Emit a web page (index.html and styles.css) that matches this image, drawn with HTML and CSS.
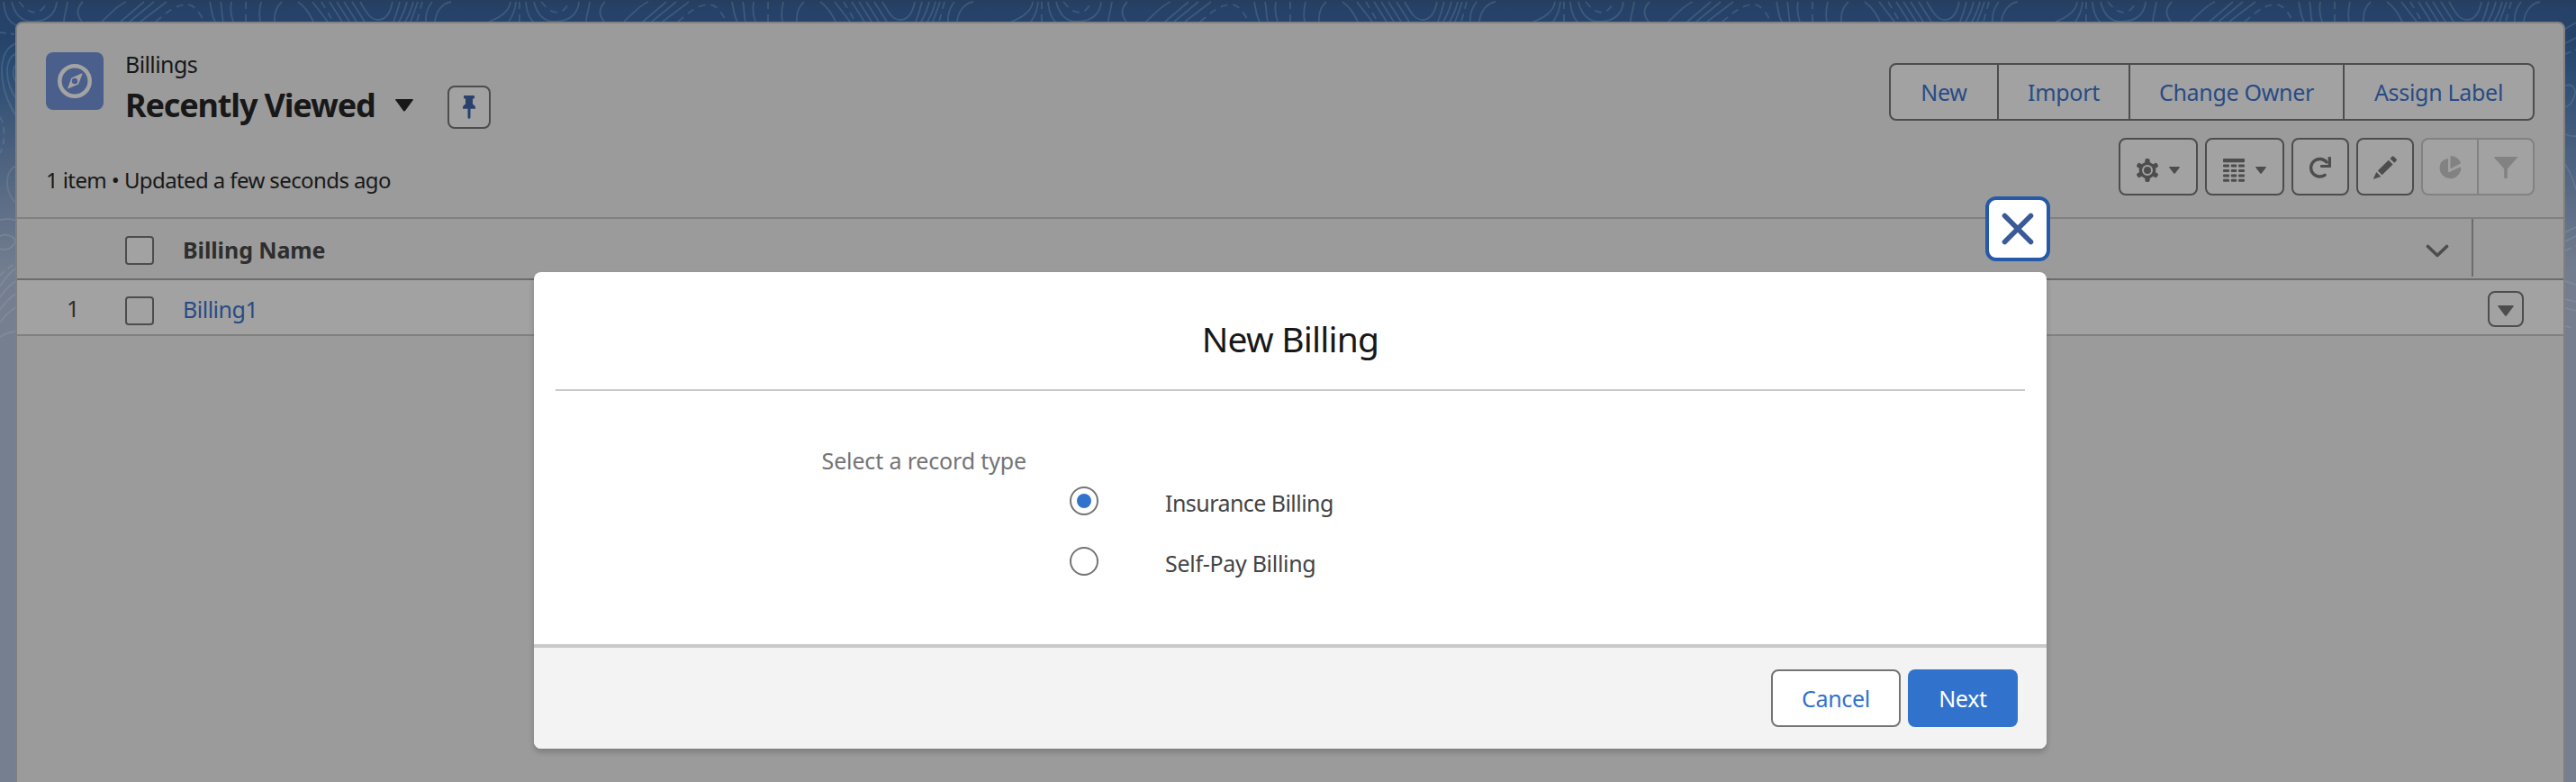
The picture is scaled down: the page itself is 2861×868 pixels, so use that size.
FILE: index.html
```html
<!DOCTYPE html>
<html lang="en">
<head>
<meta charset="utf-8">
<title>Recently Viewed | Billings</title>
<link rel="stylesheet" href="styles.css">
</head>
<body>
<svg class="backdrop" width="2861" height="400" viewBox="0 0 2861 400" aria-hidden="true">
  <defs>
    <g id="contours">
      <path d="M4 2C5 14 8 24 18 28M13 2C16 14 22 24 36 24C54 24 62 14 63 2M75 2C74 10 71 18 71 24M92 2C84 10 86 18 91 24M140 2C130 6 122 16 113 24M160 2L134 24M171 2L144 24M185 2L156 24M233 2C235 10 235 18 239 24M245 2C247 10 246 18 248 24M257 2Q255 14 259 24M290 2Q287 14 289 24M313 2Q304 10 305 24M331 2C342 10 345 18 348 24M347 2L364 24M366 2L380 24M374 2L388 24M382 2L396 24M391 2L405 24M400 2C408 16 412 22 420 22C430 22 434 12 436 2M444 2Q441 14 437 24M452 2Q449 14 443 24M459 2Q456 14 450 24M464 2Q460 14 456 24M480 2Q472 12 473 24M501 2C490 4 484 14 483 24M567 2C566 12 555 20 543 24M573 2Q572 14 565 24"/>
      <path stroke-dasharray="8 6" d="M21 2C28 10 33 14 40 14C46 13 50 7 52 2M173 24C185 14 195 5 207 5C217 5 222 16 227 24M273 2V24M357 2L370 24M469 2L463 24M577 2V24"/>
    </g>
  </defs>
  <g class="contour-lines">
    <use href="#contours"/><use href="#contours" x="580"/><use href="#contours" x="1160"/><use href="#contours" x="1740"/><use href="#contours" x="2320"/>
    <path d="M20 48C-4 52-4 96 20 132M20 59C4 62 4 92 20 112M20 70C14 74 12 84 20 94M20 184C4 186 4 218 20 226"/>
    <path stroke-dasharray="7 5" d="M0 36L16 38M0 130C6 138 6 160 0 170"/>
    <path d="M2849 32L2861 25M2849 48L2861 42M2849 95C2858 92 2863 100 2858 110C2854 119 2850 119 2847 118M2847 148Q2854 152 2861 151M2847 180Q2855 190 2861 210"/>
    <path stroke-dasharray="7 5" d="M2849 60L2861 55"/>
    <g class="faint">
      <path d="M0 244Q10 242 20 245M0 262C8 258 20 264 16 270C12 278 4 278 0 276M0 318Q8 304 20 296M0 330Q8 318 20 310M0 344Q8 332 20 324M0 358Q8 346 20 340M0 374Q8 368 20 368M2849 258L2861 252M2849 268L2861 262M2849 312L2861 316M2849 332L2861 335M2849 342L2861 345"/>
      <path stroke-dasharray="7 5" d="M0 306Q8 296 20 292M2849 278L2861 273M2849 362L2861 365"/>
    </g>
  </g>
</svg>

<main class="panel">
  <header class="list-header">
    <div class="heading-side">
      <div class="heading">
        <div class="object-icon">
          <svg width="64" height="64" viewBox="0 0 64 64"><circle cx="32" cy="32" r="16.7" fill="none" stroke="#a3a3a3" stroke-width="4.6"/><path fill="#a3a3a3" fill-rule="evenodd" d="M39.600 23.600q1.400-.6.800.8l-4.300 11-11 4.800q-1.300.5-.8-.8l4-10.800zM32 28.800a3.200 3.200 0 1 0 0 6.400a3.200 3.200 0 0 0 0-6.400z"/></svg>
        </div>
        <div class="titles">
          <div class="object-name">Billings</div>
          <div class="view-line">
            <h1 class="view-name">Recently Viewed</h1>
            <svg class="view-caret" width="20" height="14" viewBox="0 0 20 14"><path fill="#181818" d="M1 0h18q1.500 0 .6 1.300L11 13q-1 1.200-2 0L.4 1.300Q-.5 0 1 0z"/></svg>
            <button class="pin"><svg width="16" height="26" viewBox="0 0 16 26"><path fill="#29416c" d="M3 0h10q1 0 1 1v1.400q0 1-1 1H12v6q2.800 1.300 3.200 4 .1 1.400-1 1.400H9.500V24q0 1.500-1.500 2-1.500-.5-1.500-2v-9.200H1.800q-1.100 0-1-1.400.4-2.700 3.200-4v-6H3q-1 0-1-1V1q0-1 1-1z"/></svg></button>
          </div>
        </div>
      </div>
      <div class="status">1 item • Updated a few seconds ago</div>
    </div>
    <div class="actions">
      <div class="button-group">
        <button class="b-new">New</button><button class="b-import">Import</button><button class="b-owner">Change Owner</button><button class="b-label">Assign Label</button>
      </div>
      <div class="tools">
        <button class="tool wide">
          <svg class="low" width="24" height="26" viewBox="0 0 24 26"><g fill="#4d4d4d"><circle cx="12" cy="13" r="9.300"/><rect x="9.300" y="0" width="5.400" height="26" rx="2"/><rect x="9.300" y="0" width="5.400" height="26" rx="2" transform="rotate(60 12 13)"/><rect x="9.300" y="0" width="5.400" height="26" rx="2" transform="rotate(120 12 13)"/></g><circle cx="12" cy="13" r="5" fill="#4d4d4d" stroke="#a2a2a2" stroke-width="2"/></svg>
          <svg class="low" width="12" height="8" viewBox="0 0 12 8"><path fill="#4d4d4d" d="M.5 0h11q.8 0 .2.9L6.700 7.500q-.7.800-1.400 0L.3.900Q-.3 0 .5 0z"/></svg>
        </button>
        <button class="tool wide">
          <svg class="low" width="24" height="26" viewBox="0 0 24 26" fill="#4d4d4d"><rect width="24" height="4.300" rx="1"/><g id="cells"><rect y="6.600" width="7" height="3" rx="1"/><rect x="8.800" y="6.600" width="6.400" height="3" rx="1"/><rect x="17" y="6.600" width="7" height="3" rx="1"/></g><use href="#cells" y="5.400"/><use href="#cells" y="10.800"/><use href="#cells" y="16.200"/></svg>
          <svg class="low" width="12" height="8" viewBox="0 0 12 8"><path fill="#4d4d4d" d="M.5 0h11q.8 0 .2.900L6.700 7.500q-.7.800-1.400 0L.3.900Q-.3 0 .5 0z"/></svg>
        </button>
        <button class="tool"><svg class="high" width="24" height="24" viewBox="0 0 24 24"><path fill="none" stroke="#4d4d4d" stroke-width="3.400" stroke-linecap="round" d="M17 20.300A9.800 9.800 0 1 1 19 6"/><path fill="#4d4d4d" d="M20.600 1q0-1 1-1H23q1 0 1 1v10q0 1-1 1H13.300q-1.300 0-1.300-1V10q0-1 1.300-1h7.300z"/></svg></button>
        <button class="tool"><svg class="high" width="26" height="26" viewBox="0 0 26 26" fill="#4d4d4d"><path d="M18.500 3l2.200-2.200q1-1 2 0l2.800 2.800q1 1 0 2L23.200 7.800zM16.800 4.700l4.800 4.700L9.600 21.200l-4.800-4.700zM3.300 18l5 4.900-7.200 2.700q-1.300.4-.9-.9z"/></svg></button>
        <div class="tool-pair">
          <button><svg class="high" width="25" height="26" viewBox="0 0 25 26" fill="#828282"><path d="M10 3Q.5 4.500.5 14A12 12 0 0 0 24 16.500q.3-2.800-.2-4.200L11.300 18q-1.300.6-1.300-1z"/><path d="M12.500 1q0-1 1-1Q21 .8 23.800 7.500q.4.900-.5 1.300l-9.500 5q-1.300.7-1.300-.8z"/></svg></button>
          <button><svg class="high" width="26" height="24" viewBox="0 0 26 24"><path fill="#828282" d="M1 0h24q1.500 0 .6 1.300L15.600 12.500q-.8 1-.8 2V23q0 1-1 1h-1.600q-1 0-1-1v-8.500q0-1-.8-2L.4 1.300Q-.5 0 1 0z"/></svg></button>
        </div>
      </div>
    </div>
  </header>

  <div class="row head-row">
    <span class="num"></span><span class="check"></span><span class="col-name">Billing Name</span>
    <svg class="chevron" width="26" height="15" viewBox="0 0 26 15"><path fill="none" stroke="#4d4d4d" stroke-width="3.600" stroke-linecap="round" stroke-linejoin="round" d="M2.500 2.500L13 12.500L23.500 2.500"/></svg>
    <span class="end-cell"></span>
  </div>
  <div class="row data-row">
    <span class="num">1</span><span class="check"></span><a class="record">Billing1</a>
    <button class="row-menu"><svg width="18" height="12" viewBox="0 0 18 12"><path fill="#4d4d4d" d="M1 0h16q1.400 0 .5 1.200L10 11.200q-1 1.100-2 0L.5 1.200Q-.4 0 1 0z"/></svg></button>
  </div>
</main>

<section class="modal" role="dialog" aria-label="New Billing">
  <button class="close" aria-label="Close"><svg width="36" height="36" viewBox="0 0 36 36"><path stroke="#3a5a97" stroke-width="5.600" stroke-linecap="round" d="M3.500 3.500L32.500 32.500M32.500 3.500L3.500 32.500"/></svg></button>
  <h2 class="modal-title"><span>New Billing</span></h2>
  <div class="modal-body">
    <div class="prompt"><span>Select a record type</span></div>
    <div class="options">
      <label class="option"><span class="radio on"></span><span class="opt-a">Insurance Billing</span></label>
      <label class="option"><span class="radio"></span><span class="opt-b">Self-Pay Billing</span></label>
    </div>
  </div>
  <footer class="modal-footer">
    <button class="cancel">Cancel</button>
    <button class="next">Next</button>
  </footer>
</section>
</body>
</html>
```
FILE: styles.css
```css
* { box-sizing: border-box; }
body {
  margin: 0;
  height: 868px;
  overflow: hidden;
  padding: 24px 12px 0 17px;
  font: 25px/32px "Noto Sans", "Open Sans", sans-serif;
  letter-spacing: -0.3px;
  color: #181818;
  background: linear-gradient(#253f60 0, #27426a 14px, #254369 40px, #2b4b72 75px, #405a7b 140px, #5b6c85 220px, #727d8f 300px, #757f90 360px, #757f8f 100%);
}
button { font: inherit; letter-spacing: inherit; margin: 0; padding: 0; background: none; display: flex; align-items: center; justify-content: center; white-space: nowrap; }
svg { display: block; flex: none; }
h1, h2 { margin: 0; }

.backdrop { position: absolute; left: 0; top: 0; }
.contour-lines { fill: none; stroke: #8fb0bb; stroke-opacity: .22; stroke-width: 1.8; }
.faint { stroke: #98a0aa; stroke-opacity: .35; }

.panel {
  position: relative;
  height: 860px;
  background: #9b9b9b;
  border: 2px solid #808080;
  border-radius: 8px;
}
.list-header { height: 217px; padding: 0 32px; display: flex; justify-content: space-between; border-bottom: 2px solid #808080; }
.heading-side { padding-top: 32px; }
.heading { display: flex; gap: 24px; height: 82px; }
.object-icon { width: 64px; height: 64px; border-radius: 8px; background: #4a5f8b; }
.titles { margin-top: -3px; }
.object-name { letter-spacing: -0.6px; }
.view-line { display: flex; align-items: center; height: 48px; margin-top: 5px; }
.view-name { font-size: 36px; line-height: 48px; font-weight: 700; letter-spacing: -1.15px; width: 300px; padding-top: 1px; white-space: nowrap; }
.view-caret { margin-top: 2px; }
.pin { width: 48px; height: 48px; margin: 6px 0 0 38px; border: 2px solid #4d4d4d; border-radius: 8px; background: #a2a2a2; }
.status { margin-top: 44px; font-size: 24px; letter-spacing: -0.6px; }

.actions { padding-top: 44px; display: flex; flex-direction: column; align-items: flex-end; gap: 19px; }
.button-group { display: flex; height: 64px; border: 2px solid #4d4d4d; border-radius: 8px; background: #a2a2a2; }
.button-group button { border: 0; color: #284b85; }
.button-group button + button { border-left: 2px solid #4d4d4d; }
.b-new { width: 118px; }
.b-import { width: 146px; }
.b-owner { width: 238px; }
.b-label { width: 211px; }
.tools { display: flex; gap: 8px; }
.tool { width: 64px; height: 64px; gap: 12px; border: 2px solid #4d4d4d; border-radius: 8px; background: #a2a2a2; }
.wide { width: 88px; }
.low { margin-top: 8px; }
.high { margin-top: 2px; }
.tool-pair { display: flex; width: 126px; height: 64px; border: 2px solid #828282; border-radius: 8px; background: #a2a2a2; }
.tool-pair button { width: 61px; border: 0; }
.tool-pair button + button { border-left: 2px solid #828282; width: 63px; }

.row { display: flex; align-items: center; }
.head-row { height: 68px; border-bottom: 2px solid #6c6c6c; }
.data-row { height: 62px; border-bottom: 2px solid #808080; background: #a2a2a2; }
.num { width: 69px; margin-right: 51px; padding-top: 2px; text-align: right; color: #2e2e2e; }
.check { width: 32px; height: 32px; border: 2px solid #4d4d4d; border-radius: 4px; background: #a2a2a2; margin-right: 32px; margin-top: 4px; }
.data-row .check { margin-top: 8px; }
.col-name { font-weight: 700; color: #2e2e2e; letter-spacing: -0.1px; padding-top: 1px; }
.record { color: #284b85; margin-top: 4px; letter-spacing: -0.5px; }
.chevron { margin-left: auto; margin-right: 25px; margin-top: 5px; }
.end-cell { width: 102px; height: 64px; align-self: flex-start; border-left: 2px solid #6c6c6c; }
.row-menu { width: 40px; height: 40px; margin: 4px 44px 0 auto; border: 2px solid #4d4d4d; border-radius: 8px; padding-top: 3px; }

.modal {
  position: absolute;
  left: 593px;
  top: 302px;
  width: 1680px;
  height: 529px;
  display: flex;
  flex-direction: column;
  border-radius: 8px;
  background: #fff;
  box-shadow: 0 4px 6px rgba(0, 0, 0, .2);
}
.close { position: absolute; right: -4px; top: -84px; width: 72px; height: 72px; border: 4px solid #265aa8; border-radius: 12px; background: #fff; }
.modal-title { margin: 0 24px; height: 132px; padding-top: 48px; border-bottom: 2px solid #c9c9c9; text-align: center; font-size: 39px; line-height: 52px; font-weight: 400; letter-spacing: -0.8px; }
.modal-body { flex: 1; display: flex; }
.prompt { width: 595px; padding: 61px 48px 0 0; text-align: right; color: #747474; letter-spacing: -0.15px; }
.options { padding-top: 106px; display: flex; flex-direction: column; gap: 35px; }
.option { display: flex; height: 32px; gap: 74px; color: #444; }
.option span:last-child { padding-top: 2px; }
.opt-a { letter-spacing: -0.55px; }
.radio { width: 32px; height: 32px; border: 2px solid #747474; border-radius: 50%; display: flex; align-items: center; justify-content: center; }
.on::after { content: ""; width: 16px; height: 16px; border-radius: 50%; background: #3173cc; }
.modal-footer { height: 116px; padding: 24px 32px; display: flex; gap: 8px; justify-content: flex-end; border-top: 4px solid #c9c9c9; border-radius: 0 0 8px 8px; background: #f3f3f3; }
.modal-footer button { height: 64px; border-radius: 8px; }
.cancel { width: 144px; border: 2px solid #747474; background: #fff; color: #3173cc; }
.next { width: 122px; border: 0; background: #3173cc; color: #fff; }
```
